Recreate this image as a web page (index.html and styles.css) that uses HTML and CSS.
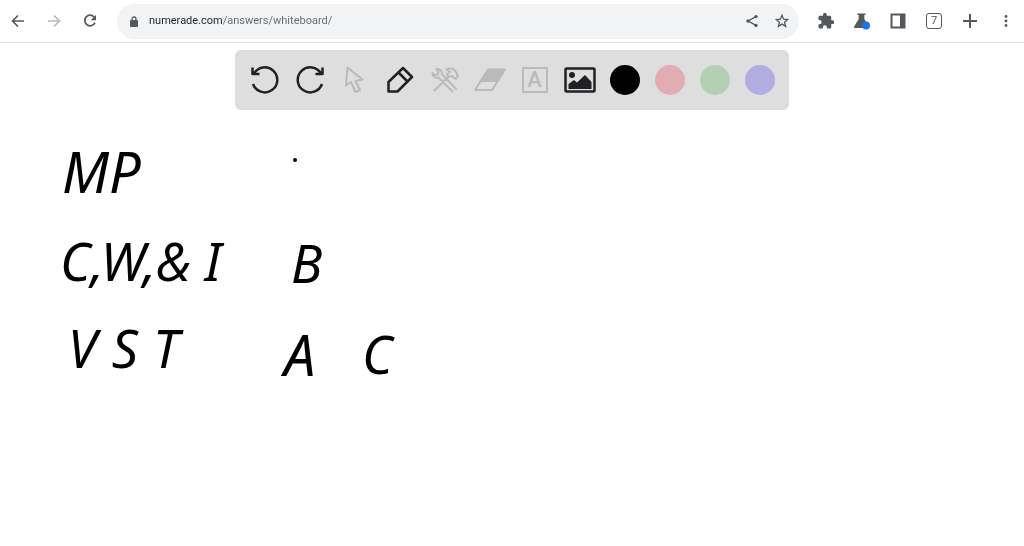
FILE: index.html
```html
<!DOCTYPE html>
<html lang="en">
<head>
    <meta charset="UTF-8">
    <meta name="viewport" content="width=device-width, initial-scale=1.0">
    <title>Whiteboard</title>
    <link rel="stylesheet" href="styles.css">
</head>
<body>
    <header class="browser-bar">
        <nav class="nav-buttons">
            <button class="bar-button" aria-label="Back">
                <svg width="16" height="16" viewBox="0 0 16 16"><path d="M14 8H3M8 2.500L2.500 8L8 13.500" class="line"/></svg>
            </button>
            <button class="bar-button faded" aria-label="Forward">
                <svg width="16" height="16" viewBox="0 0 16 16"><path d="M2 8H13M8 2.500L13.500 8L8 13.500" class="line"/></svg>
            </button>
            <button class="bar-button" aria-label="Reload">
                <svg width="16" height="16" viewBox="0 0 16 16"><path d="M12.300 4.200A5.300 5.300 0 1 0 13 9.600" class="line"/><path d="M14 2V7.300H8.700Z"/></svg>
            </button>
        </nav>

        <div class="address-bar">
            <svg class="lock" width="8" height="11" viewBox="0 0 8 11"><rect y="4" width="8" height="7" rx="1"/><path d="M2 5V3A2 2 0 0 1 6 3V5" class="line thin"/></svg>
            <input class="address" type="text" aria-label="Address" value="numerade.com/answers/whiteboard/">
            <button class="address-button" aria-label="Share">
                <svg width="14" height="14" viewBox="0 0 14 14"><path d="M11 2.600L3 7L11 11.400" class="line thin"/><circle cx="11" cy="2.600" r="1.700"/><circle cx="3" cy="7" r="1.700"/><circle cx="11" cy="11.400" r="1.700"/></svg>
            </button>
            <button class="address-button" aria-label="Bookmark">
                <svg width="14" height="14" viewBox="0 0 14 14"><path d="M7 1.300L8.600 5.200L12.800 5.500L9.600 8.200L10.600 12.300L7 10.100L3.400 12.300L4.400 8.200L1.200 5.500L5.400 5.200Z" class="line thin"/></svg>
            </button>
        </div>

        <div class="bar-actions">
            <button class="bar-button" aria-label="Extensions">
                <svg width="18" height="18" viewBox="0 0 24 24"><path d="M20.500 11H19V7c0-1.100-.9-2-2-2h-4V3.500a2.500 2.500 0 0 0-5 0V5H4c-1.100 0-2 .9-2 2v3.800h1.500a2.700 2.700 0 0 1 0 5.400H2V20c0 1.100.9 2 2 2h3.800v-1.500a2.700 2.700 0 0 1 5.400 0V22H17c1.100 0 2-.9 2-2v-4h1.500a2.500 2.500 0 0 0 0-5z"/></svg>
            </button>
            <button class="bar-button" aria-label="Experiments">
                <svg width="18" height="18" viewBox="0 0 18 18"><path d="M4.500 1.500H12.500V3H11.300V7L16 14.500Q16.500 16 15 16H2Q.5 16 1.200 14.500L5.700 7V3H4.500Z"/><circle cx="13" cy="13.500" r="4" class="dot"/></svg>
            </button>
            <button class="bar-button" aria-label="Side panel">
                <svg width="16" height="16" viewBox="0 0 16 16"><path d="M1.500 1.500H14.500V14.500H1.500Z" class="line heavy"/><path d="M10 1H15V15H10Z"/></svg>
            </button>
            <button class="bar-button" aria-label="7 open tabs"><span class="tab-count">7</span></button>
            <button class="bar-button" aria-label="New tab">
                <svg width="16" height="16" viewBox="0 0 16 16"><path d="M8 1V15M1 8H15" class="line heavy"/></svg>
            </button>
            <button class="bar-button" aria-label="Menu">
                <svg width="4" height="14" viewBox="0 0 4 14"><circle cx="2" cy="2.500" r="1.400"/><circle cx="2" cy="7" r="1.400"/><circle cx="2" cy="11.500" r="1.400"/></svg>
            </button>
        </div>
    </header>

    <main class="board">
        <div class="toolbar" role="toolbar" aria-label="Drawing tools">
            <button class="tool" aria-label="Undo">
                <svg width="30" height="30" viewBox="0 0 30 30"><path d="M3 19A12.500 12.500 0 1 0 4 8.500M2.500 2.500V9H9.500"/></svg>
            </button>
            <button class="tool" aria-label="Redo">
                <svg width="30" height="30" viewBox="0 0 30 30"><path d="M27 19A12.500 12.500 0 1 1 26 8.500M27.500 2.500V9H20.500"/></svg>
            </button>
            <button class="tool disabled" aria-label="Select">
                <svg width="30" height="30" viewBox="0 0 30 30"><path d="M7.500 2.500L6 20.500L11 17L15.500 27L20 25L15.500 16L22.500 14.500Z" class="fine"/></svg>
            </button>
            <button class="tool" aria-label="Pen">
                <svg width="30" height="30" viewBox="0 0 30 30"><path d="M3.500 26.500V17L18 3L27 12L12.500 26.500ZM13.500 7.500L22.500 16.500"/></svg>
            </button>
            <button class="tool disabled" aria-label="Tools">
                <svg width="30" height="30" viewBox="0 0 30 30"><path d="M6 4L8.500 6.500L8 9.500L4.500 10L2.500 8Q3 13.500 8.500 12.500L23 27M6 4Q12 3.500 12 9L26.500 24.500M4 26L18 12M16.500 4.500Q22 2 25 5.500L28 11L25.500 14L22 11L18.500 12L17 9L20 7Z" class="fine"/></svg>
            </button>
            <button class="tool disabled" aria-label="Eraser">
                <svg width="34" height="30" viewBox="0 0 34 30"><path d="M15 4.500H32L19 25H2Z" class="fine"/><path d="M14.500 4H33L25 17H6Z" class="fill"/></svg>
            </button>
            <button class="tool disabled" aria-label="Text"><span class="text-tool">A</span></button>
            <button class="tool" aria-label="Image">
                <svg width="32" height="28" viewBox="0 0 32 28"><rect x="1.500" y="2.500" width="29" height="23" rx="1"/><circle cx="8" cy="9" r="3" class="fill"/><path d="M4.500 23V18L10 14L13 16.500L21 9L27.500 16V23Z" class="fill"/></svg>
            </button>
            <button class="tool" aria-label="Black"><span class="swatch black"></span></button>
            <button class="tool" aria-label="Red"><span class="swatch red"></span></button>
            <button class="tool" aria-label="Green"><span class="swatch green"></span></button>
            <button class="tool" aria-label="Purple"><span class="swatch purple"></span></button>
        </div>

        <!-- Notes sit freely on the canvas -->
        <p class="note large mp">MP</p>
        <span class="note pen-dot"></span>
        <p class="note cwi">C,W,&amp; I</p>
        <p class="note answer-b">B</p>
        <p class="note vst"><span>V</span><span>S</span><span>T</span></p>
        <p class="note large answer-a">A</p>
        <p class="note answer-c">C</p>
    </main>
</body>
</html>
```
FILE: styles.css
```css
* {
    box-sizing: border-box;
}

body {
    margin: 0;
    min-height: 100vh;
    display: flex;
    flex-direction: column;
    background: #fff;
    font-family: Roboto, "Liberation Sans", sans-serif;
}

button {
    display: flex;
    align-items: center;
    justify-content: center;
    padding: 0;
    border: none;
    background: none;
    color: inherit;
    font-family: inherit;
    cursor: pointer;
}

/* Browser bar */
.browser-bar {
    display: flex;
    align-items: center;
    gap: 9px;
    height: 43px;
    border-bottom: 1px solid #dfe1e4;
    color: #55585c;
}

.browser-bar svg {
    fill: currentColor;
}

.nav-buttons,
.bar-actions {
    display: flex;
}

.bar-button {
    width: 36px;
    height: 36px;
}

.faded {
    color: #b8babd;
}

.browser-bar .line {
    fill: none;
    stroke: currentColor;
    stroke-width: 1.7;
}

.browser-bar .thin {
    stroke-width: 1.3;
}

.browser-bar .heavy {
    stroke-width: 2;
}

.browser-bar .dot {
    fill: #1a73e8;
}

.address-bar {
    flex: 1;
    display: flex;
    align-items: center;
    height: 35px;
    padding: 0 2px 0 13px;
    border-radius: 18px;
    background: #f1f3f4;
}

.address {
    flex: 1;
    min-width: 0;
    margin-left: 11px;
    padding: 0;
    border: none;
    outline: none;
    /* Host name dark, path lighter */
    background: linear-gradient(to right, #202124 74px, #65696e 74px);
    -webkit-background-clip: text;
    background-clip: text;
    color: transparent;
    caret-color: #202124;
    font-family: inherit;
    font-size: 11px;
    line-height: 16px;
}

.address-button {
    width: 30px;
    height: 30px;
}

.tab-count {
    width: 16px;
    height: 16px;
    border: 1px solid currentColor;
    border-radius: 3px;
    font-size: 11px;
    line-height: 14px;
}

/* Whiteboard */
.board {
    position: relative;
    flex: 1;
    padding: 7px 16px;
}

.toolbar {
    display: flex;
    width: fit-content;
    margin: 0 auto;
    padding: 7px;
    border-radius: 6px;
    background: #dedede;
    color: #202124;
}

.tool {
    width: 45px;
    height: 46px;
}

.tool svg {
    fill: none;
    stroke: currentColor;
    stroke-width: 2.5;
    stroke-linejoin: round;
}

.tool .fine {
    stroke-width: 2;
}

.tool .fill {
    fill: currentColor;
    stroke: none;
}

.disabled {
    color: #bababa;
}

.text-tool {
    width: 26px;
    height: 26px;
    border: 2px solid currentColor;
    font-size: 22px;
    font-weight: 500;
    line-height: 22px;
}

.swatch {
    width: 30px;
    height: 30px;
    border-radius: 50%;
}

.black {
    background: #000;
}

.red {
    background: #e2acb3;
}

.green {
    background: #b4d0b2;
}

.purple {
    background: #b3ade2;
}

/* Notes */
.note {
    position: absolute;
    margin: 0;
    color: #000;
    font-family: "Noto Sans", "Open Sans", sans-serif;
    font-style: italic;
    font-size: 52px;
    line-height: 60px;
    white-space: nowrap;
}

.large {
    font-size: 56px;
}

.mp {
    left: 62px;
    top: 98px;
}

.cwi {
    left: 60px;
    top: 188px;
}

.vst {
    left: 68px;
    top: 275px;
    display: flex;
    gap: 15px;
}

.answer-b {
    left: 291px;
    top: 190px;
}

.answer-a {
    left: 284px;
    top: 281px;
}

.answer-c {
    left: 362px;
    top: 281px;
}

.pen-dot {
    left: 293px;
    top: 115px;
    width: 4px;
    height: 4px;
    border-radius: 50%;
    background: #000;
}
```
